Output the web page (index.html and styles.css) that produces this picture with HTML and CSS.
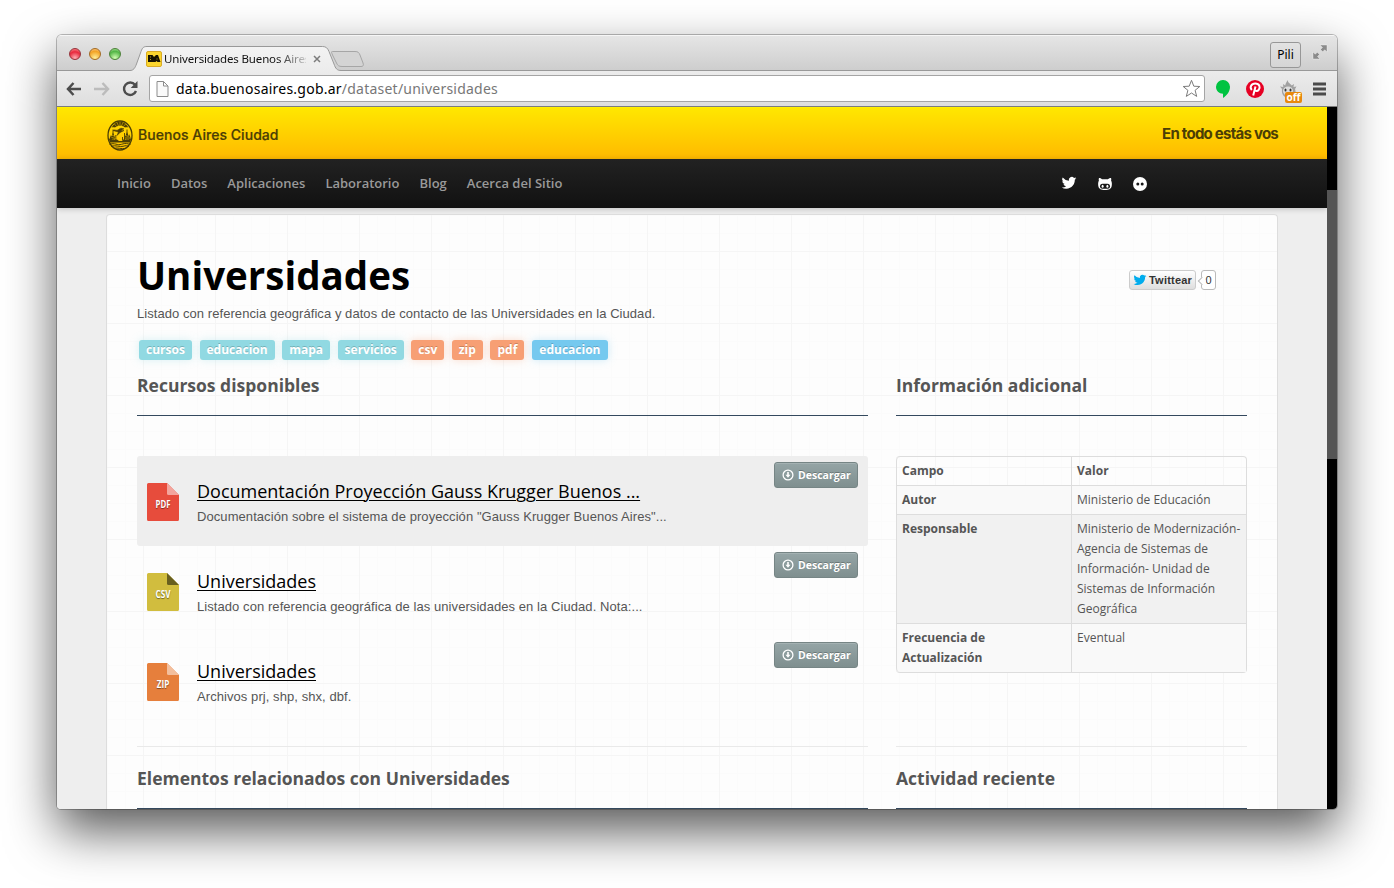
FILE: index.html
```
<!DOCTYPE html>
<html lang="es">
<head>
<meta charset="utf-8">
<title>Universidades Buenos Aires</title>
<link rel="stylesheet" href="styles.css">
</head>
<body>
<svg width="0" height="0" class="defs">
  <symbol id="bird" viewBox="0 0 24 24"><path d="M24 4.600a10 10 0 0 1-2.800.8 4.900 4.900 0 0 0 2.100-2.700 9.900 9.900 0 0 1-3.100 1.200 4.900 4.900 0 0 0-8.400 4.500A14 14 0 0 1 1.700 3.100a4.900 4.900 0 0 0 1.500 6.600 4.900 4.900 0 0 1-2.200-.6v.06a4.900 4.900 0 0 0 3.900 4.800 5 5 0 0 1-2.200.1 4.900 4.900 0 0 0 4.600 3.400A9.900 9.900 0 0 1 0 19.500 14 14 0 0 0 7.500 21.700c9.100 0 14.300-7.700 14-14.600A10 10 0 0 0 24 4.600z"/></symbol>
  <symbol id="down" viewBox="0 0 12 12"><circle cx="6" cy="6" r="4.900" fill="none" stroke="currentColor" stroke-width="1.300"/><path d="M5.200 3h1.600v2.800h1.700L6 8.700 3.500 5.800h1.700z" fill="currentColor"/></symbol>
</svg>
<div class="window">
  <div class="tabstrip">
    <div class="lights"><i class="light red"></i><i class="light amber"></i><i class="light green"></i></div>
    <div class="tab">
      <svg class="tab-shape" width="280" height="26" viewBox="0 0 280 26">
        <defs><linearGradient id="tg" x1="0" y1="0" x2="0" y2="1"><stop offset="0" stop-color="#f3f3f3"/><stop offset="1" stop-color="#ececec"/></linearGradient></defs>
        <path d="M0 25.500C3.500 25.500 5 23 6.500 19L11 6.500C12.500 2.500 13.500 1.500 17 1.500H192.500C196 1.500 197.500 3 199 6.500L204 19C205.500 23.500 207 25.500 211 25.500L211 26H0z" fill="url(#tg)"/>
        <path d="M0 25.500C3.500 25.500 5 23 6.500 19L11 6.500C12.500 2.500 13.500 1.500 17 1.500H192.500C196 1.500 197.500 3 199 6.500L204 19C205.500 23.500 207 25.500 211 25.500" fill="none" stroke="#999"/>
        <path d="M202.500 6.500H225C228 6.500 229 7.500 230 10L233 18C234 20.500 233 21.500 231 21.500H212C209 21.500 207.500 20.500 206.500 18L202.500 10C201.500 7.500 201 6.500 202.500 6.500z" fill="#d4d4d4" stroke="#a6a6a6"/>
      </svg>
      <div class="tab-content">
        <svg width="16" height="16" viewBox="0 0 16 16"><rect x=".5" y=".5" width="15" height="15" rx="1.500" fill="#fbd52e" stroke="#d9ab25"/><path d="M2 4h4.500l1.500 2 2-2h2l2.500 7h-3l-1-1-1 1H2z" fill="#161200"/><path d="M4 6h1M4 8.500h1M10.500 8h1" stroke="#fbd52e" stroke-width=".7"/></svg>
        <span class="tab-title">Universidades Buenos Aires</span>
        <svg class="close" width="8" height="8" viewBox="0 0 8 8"><path d="M1 1l6 6M7 1L1 7" stroke="#7c7c7c" stroke-width="1.500"/></svg>
      </div>
    </div>
    <div class="profile">Pili</div>
    <svg class="full" width="16" height="16" viewBox="0 0 16 16" fill="#8b8b8b"><path d="M8 1h7v7l-2.300-2.200-2 2L8.500 5.500l2-2zM8 15H1V8l2.300 2.200 2-2 2.200 2.300-2 2z" stroke="#f7f7f7" stroke-width=".4"/></svg>
  </div>
  <div class="toolbar">
    <svg class="arrow" width="16" height="14" viewBox="0 0 16 14"><path d="M7.500 1L2 7l5.500 6M2 7h13" fill="none" stroke="#4d4d4d" stroke-width="2.500"/></svg>
    <svg class="arrow next" width="16" height="14" viewBox="0 0 16 14"><path d="M8.500 1L14 7l-5.500 6M0 7h14" fill="none" stroke="#bcbcbc" stroke-width="2.500"/></svg>
    <svg class="reload" width="16" height="16" viewBox="0 0 16 16"><path d="M13 3.800A6.200 6.200 0 1 0 14 10" fill="none" stroke="#4d4d4d" stroke-width="2.400"/><path d="M15.500 0v7H8.700z" fill="#4d4d4d"/></svg>
    <div class="address">
      <svg width="13" height="16" viewBox="0 0 13 16"><path d="M1 .5h6.500l4.500 4.500v10.500H1zM7.500.5V5H12" fill="#fafafa" stroke="#8c8c8c"/></svg>
      <span class="url">data.buenosaires.gob.ar<span>/dataset/universidades</span></span>
      <svg class="star" width="19" height="19" viewBox="0 0 19 19"><path d="M9.500 1.300l2.300 5.900 6 .3-4.700 3.800 1.600 6.100-5.200-3.400-5.200 3.400 1.600-6.100L1.200 7.500l6-.3z" fill="#fff" stroke="#7b7b7b" stroke-linejoin="round"/></svg>
    </div>
    <svg class="hang" width="14" height="18" viewBox="0 0 14 18"><path d="M7 0a6.900 6.900 0 0 0-7 6.800c0 4 3 6.800 7 7V18c4-2.500 7-6.600 7-11.200A6.900 6.900 0 0 0 7 0z" fill="#00c341"/></svg>
    <svg class="pin" width="18" height="18" viewBox="0 0 18 18"><circle cx="9" cy="9" r="9" fill="#e60023"/><path d="M5.800 10C3.300 7.400 5.300 3.600 9.200 3.600c4.600 0 5.300 3.800 3.500 6.200-1.200 1.700-3.200 1.500-3.900.3M9.500 6.500L7.200 15.500" fill="none" stroke="#fff" stroke-width="2"/></svg>
    <div class="ghost">
      <svg width="17" height="18" viewBox="0 0 17 18"><path d="M7.500 0c-.8 2.500-2 3.200-2.300 5.500L3 4l.3 3L0 6.500 2 9c-.6 4.500 1 8 6 9h4c4-2 4-6 3-9l1.500-2.500-3 .5.500-3-2.300 1.500C11 4 8 3 7.500 0z" fill="#a1a1a1"/><ellipse cx="8" cy="11" rx="5" ry="4.500" fill="#ddd"/><ellipse cx="5.500" cy="10" rx="1" ry="1.500" fill="#333"/><ellipse cx="10.500" cy="10" rx="1" ry="1.500" fill="#333"/></svg>
      <span class="off">off</span>
    </div>
    <svg class="menu" width="13" height="14" viewBox="0 0 13 14"><path d="M0 2h13M0 7h13M0 12h13" stroke="#4b4b4b" stroke-width="2.800"/></svg>
  </div>
  <div class="page">
    <div class="site">
      <header class="brand">
        <svg class="seal" width="26" height="31" viewBox="0 0 26 31" fill="none" stroke="#4b3e05"><ellipse cx="13" cy="15.500" rx="12" ry="14.500" stroke-width="1.300"/><path d="M4.500 7.500C7 3.500 10 1.500 13 1.500s6 2 8.500 6c-1.500-.5-2.500-.5-3.500 0-2.500-2.500-7.500-2.500-10 0-1-.5-2-.5-3.500 0z" fill="#4b3e05" stroke="none"/><path d="M13 2v4M10 2.500l1.500 3.500M16 2.500L14.500 6M7.500 4l2 2.500M18.500 4l-2 2.500" stroke="#fc0" stroke-width=".5"/><path d="M6 10.500c2-1.500 3 .5 5-.5 2-1.500 3-2.500 6-1-1 0-2 .5-3 2l3-.5-4 2-3 3 1.500-3.500-2-.5z" fill="#4b3e05" stroke-width=".6"/><path d="M6 12.500L3.500 19h5zM4 15l-2 5h3zM20 12l-3 7h6zM22.500 14l-1 6H24z" fill="#4b3e05" stroke="none"/><path d="M6 9.500v11M20 9.500v11M17.500 13v7M8.800 15v5M15.500 17v3" stroke-width=".9"/><path d="M5 15l2 1M4.500 17.500l4 1M18.500 15.500l3 1M18 18h5" stroke="#fc0" stroke-width=".6"/><path d="M2 19.500h8l2 1.500h3l1-1.500h8l-1 3H3z" fill="#4b3e05" stroke="none"/><path d="M2.500 24.300c5-2 8 1.500 12 0s6-.5 9 0M4 26.300c5-1.500 9 1 12 0s4-.5 6 0M7 28.300c4-1 7 1 12 0" stroke-width="1"/></svg>
        <span class="city">Buenos Aires Ciudad</span>
        <span class="slogan">En todo estás vos</span>
      </header>
      <nav class="nav">
        <a>Inicio</a><a>Datos</a><a>Aplicaciones</a><a>Laboratorio</a><a>Blog</a><a>Acerca del Sitio</a>
        <div class="social">
          <svg width="16" height="15" viewBox="0 1 24 22" fill="#fff"><use href="#bird"/></svg>
          <svg width="14" height="14" viewBox="0 0 14 14"><path d="M1 1c1 0 2.300.5 3 1.200h6C10.700 1.500 12 1 13 1c.4 1 .3 2 .1 2.700C14 5 14 7 13.700 9c-.5 3-3 4-6.700 4S.8 12 .3 9C0 7 0 5 .9 3.700.7 3 .6 2 1 1z" fill="#fff"/><rect x="2" y="6.800" width="10" height="5" rx="2.500" fill="#181818"/><ellipse cx="4.600" cy="9.200" rx="1" ry="1.500" fill="#fff"/><ellipse cx="9.400" cy="9.200" rx="1" ry="1.500" fill="#fff"/></svg>
          <svg width="14" height="14" viewBox="0 0 14 14"><circle cx="7" cy="7" r="7" fill="#fff"/><circle cx="4.800" cy="7" r="1.500" fill="#181818"/><circle cx="9.200" cy="7" r="1.500" fill="#181818"/></svg>
        </div>
      </nav>
      <main class="card">
        <div class="heading">
          <h1>Universidades</h1>
          <div class="tweet"><span class="tweet-btn"><svg width="14" height="13" viewBox="0 1 24 22" fill="#00aced"><use href="#bird"/></svg>Twittear</span><span class="count">0</span></div>
        </div>
        <p class="lead">Listado con referencia geográfica y datos de contacto de las Universidades en la Ciudad.</p>
        <div class="tags">
          <span class="tag teal w53">cursos</span><span class="tag teal w75">educacion</span><span class="tag teal w48">mapa</span><span class="tag teal w66">servicios</span><span class="tag orange w33">csv</span><span class="tag orange w31">zip</span><span class="tag orange w34">pdf</span><span class="tag blue w76">educacion</span>
        </div>
        <div class="columns">
          <section>
            <h2>Recursos disponibles</h2>
            <div class="resources">
              <article class="resource shaded">
                <svg class="file" width="32" height="38" viewBox="0 0 32 38"><path d="M1.500 0H20l12 12v24.500a1.500 1.500 0 0 1-1.500 1.500h-29A1.500 1.500 0 0 1 0 36.500v-35A1.500 1.500 0 0 1 1.500 0z" fill="#e74c3c"/><path d="M20 0l12 12H21.500A1.500 1.500 0 0 1 20 10.500z" fill="#f3a59d"/><text x="16" y="25" textLength="15" lengthAdjust="spacingAndGlyphs">PDF</text></svg>
                <div class="info"><h3><a>Documentación Proyección Gauss Krugger Buenos ...</a></h3><p>Documentación sobre el sistema de proyección "Gauss Krugger Buenos Aires"...</p></div>
                <a class="download"><svg width="12" height="12"><use href="#down"/></svg>Descargar</a>
              </article>
              <article class="resource">
                <svg class="file" width="32" height="38" viewBox="0 0 32 38"><path d="M1.500 0H20l12 12v24.500a1.500 1.500 0 0 1-1.500 1.500h-29A1.500 1.500 0 0 1 0 36.500v-35A1.500 1.500 0 0 1 1.500 0z" fill="#d1bd3e"/><path d="M20 0l12 12H21.500A1.500 1.500 0 0 1 20 10.500z" fill="#685f1f"/><text x="16" y="25" textLength="15" lengthAdjust="spacingAndGlyphs">CSV</text></svg>
                <div class="info"><h3><a>Universidades</a></h3><p>Listado con referencia geográfica de las universidades en la Ciudad. Nota:...</p></div>
                <a class="download"><svg width="12" height="12"><use href="#down"/></svg>Descargar</a>
              </article>
              <article class="resource">
                <svg class="file" width="32" height="38" viewBox="0 0 32 38"><path d="M1.500 0H20l12 12v24.500a1.500 1.500 0 0 1-1.500 1.500h-29A1.500 1.500 0 0 1 0 36.500v-35A1.500 1.500 0 0 1 1.500 0z" fill="#e67f3c"/><path d="M20 0l12 12H21.500A1.500 1.500 0 0 1 20 10.500z" fill="#f3bf9d"/><text x="16" y="25" textLength="12.500" lengthAdjust="spacingAndGlyphs">ZIP</text></svg>
                <div class="info"><h3><a>Universidades</a></h3><p>Archivos prj, shp, shx, dbf.</p></div>
                <a class="download"><svg width="12" height="12"><use href="#down"/></svg>Descargar</a>
              </article>
            </div>
          </section>
          <section>
            <h2>Información adicional</h2>
            <table class="facts">
              <tr><th>Campo</th><th>Valor</th></tr>
              <tr class="odd"><th>Autor</th><td>Ministerio de Educación</td></tr>
              <tr class="even"><th>Responsable</th><td>Ministerio de Modernización- Agencia de Sistemas de Información- Unidad de Sistemas de Información Geográfica</td></tr>
              <tr class="odd"><th>Frecuencia de Actualización</th><td>Eventual</td></tr>
            </table>
          </section>
        </div>
        <div class="columns lower">
          <section><h2>Elementos relacionados con Universidades</h2></section>
          <section><h2>Actividad reciente</h2></section>
        </div>
      </main>
    </div>
    <div class="scrollbar"><div class="thumb"></div></div>
  </div>
</div>
</body>
</html>
```
FILE: styles.css
```
* { box-sizing: border-box; }
body { margin: 0; height: 888px; overflow: hidden; background: #fff; padding: 35px 57px; font-family: "Open Sans", sans-serif; color: #555; }
svg { display: block; flex: none; }
h1, h2, h3, p { margin: 0; }
.defs { position: absolute; }
.window { width: 1280px; height: 774px; border-radius: 5px 5px 4px 4px; overflow: hidden; box-shadow: 0 0 0 1px rgba(0,0,0,.25), 0 22px 50px rgba(0,0,0,.66); }

/* Browser frame */
.tabstrip { height: 36px; display: flex; align-items: center; padding: 0 9px 0 12px; background: linear-gradient(#e6e6e6, #cdcdcd); box-shadow: inset 0 1px #f6f6f6, inset 0 -1px #999; }
.lights { display: flex; gap: 8px; padding-top: 2px; width: 64px; flex: none; }
.light { width: 12px; height: 12px; border-radius: 50%; border: 1px solid; }
.red { background: radial-gradient(circle at 50% 90%, #ffb0b5, #e8283c 60%, #f99 100%); border-color: #96323a; }
.amber { background: radial-gradient(circle at 50% 90%, #fff09a, #f3a324 65%, #fc9 100%); border-color: #a36b23; }
.green { background: radial-gradient(circle at 50% 90%, #d5ffb5, #52b545 65%, #bea 100%); border-color: #4c8138; }
.tab { display: grid; align-self: flex-end; height: 26px; width: 280px; margin-left: -3px; }
.tab-shape, .tab-content { grid-area: 1 / 1; }
.tab-content { display: flex; align-items: center; padding: 2px 0 0 16px; height: 26px; }
.tab-title { margin-left: 2px; width: 142px; overflow: hidden; white-space: nowrap; color: #111; font: 11.500px/16px "Noto Sans", sans-serif; letter-spacing: -.15px; mask-image: linear-gradient(90deg, #000 112px, transparent 148px); }
.close { margin-left: 7px; }
.profile { margin-left: auto; width: 31px; height: 26px; margin-top: 3px; border: 1px solid #979797; border-radius: 3px; background: linear-gradient(#e2e2e2, #d5d5d5); color: #000; font: 12px/24px "Noto Sans", sans-serif; text-align: center; }
.full { margin-left: 11px; margin-bottom: 2px; }
.toolbar { height: 36px; display: flex; align-items: center; padding-left: 9px; background: linear-gradient(#ececec, #dedede); border-bottom: 1px solid #7c7c7c; }
.next { margin-left: 12px; }
.reload { margin-left: 12px; }
.address { margin-left: 11px; width: 1056px; height: 27px; border: 1px solid #a5a5a5; border-radius: 3px; background: #fff; display: flex; align-items: center; padding: 0 3px 0 6px; }
.url { margin-left: 7px; color: #000; font: 14px/20px "Noto Sans", sans-serif; letter-spacing: .23px; white-space: nowrap; }
.url span { color: #777; }
.star { margin-left: auto; }
.hang { margin-left: 11px; }
.pin { margin-left: 16px; }
.ghost { margin-left: 16px; width: 22px; position: relative; }
.off { position: absolute; left: 5px; top: 12px; width: 17px; height: 11px; border-radius: 2px; background: #e8890c; color: #fff; font: bold 10px/10px "Noto Sans", sans-serif; text-align: center; }
.menu { margin-left: 11px; }

/* Site */
.page { display: flex; height: 702px; }
.site { width: 1270px; background: #eee; }
.scrollbar { width: 10px; background: #000; padding-top: 83px; }
.thumb { height: 269px; background: #555; }
.brand { height: 52px; display: flex; align-items: center; padding: 4px 49px 0 50px; background: linear-gradient(#ffe800, #ffb900); box-shadow: inset 0 1px #fff000; color: #4b3e05; }
.city { margin-left: 5px; font: 500 14px/20px Inter, sans-serif; letter-spacing: .05px; -webkit-text-stroke: .2px; }
.slogan { margin-left: auto; margin-bottom: 2px; font: 700 15px/20px Inter, sans-serif; letter-spacing: -.75px; }
.nav { height: 49px; display: flex; align-items: center; gap: 20px; padding: 0 180px 0 60px; background: linear-gradient(#222, #111); box-shadow: 0 1px 6px rgba(0,0,0,.2); color: #999; font-size: 13px; font-weight: 600; }
.nav a { padding-bottom: 2px; }
.social { margin-left: auto; display: flex; align-items: center; gap: 21px; }
.card { margin: 6px 49px 0; height: 596px; padding: 30px; border: 1px solid #ddd; border-bottom: 0; border-radius: 4px 4px 0 0; overflow: hidden; background:
    repeating-linear-gradient(90deg, transparent 0 36px, #f5f5f5 36px 37px, transparent 37px 72px),
    repeating-linear-gradient(transparent 0 36px, #f5f5f5 36px 37px, transparent 37px 72px),
    repeating-linear-gradient(90deg, #fbfbfb 0 1px, transparent 1px 18px),
    repeating-linear-gradient(#fbfbfb 0 1px, transparent 1px 18px), #fdfdfd; }
.heading { display: flex; justify-content: space-between; height: 60px; }
h1 { font-size: 38.500px; line-height: 60px; color: #000; font-weight: 700; }
.tweet { display: flex; gap: 5px; align-items: flex-start; padding: 25px 31px 0 0; }
.tweet-btn { display: flex; align-items: center; gap: 2px; height: 20px; width: 67px; padding-left: 3px; border: 1px solid #ccc; border-radius: 3px; background: linear-gradient(#fff, #dedede); color: #333; font: bold 11px/18px "Liberation Sans", sans-serif; letter-spacing: .22px; }
.count { position: relative; height: 20px; width: 15px; border: 1px solid #bbb; border-radius: 3px; background: #fff; color: #333; font: 11px/18px "Liberation Sans", sans-serif; text-align: center; }
.count::before { content: ""; position: absolute; left: -3.500px; top: 6.500px; width: 5px; height: 5px; border-left: 1px solid #bbb; border-bottom: 1px solid #bbb; background: #fff; transform: rotate(45deg); }
.lead { font: 13px/20px "Liberation Sans", sans-serif; letter-spacing: .06px; margin-top: -1px; }
.tags { display: flex; gap: 7.570px; margin: 16px 0 0 2px; }
.tag { height: 20px; border-radius: 3px; color: #fff; font-size: 12px; font-weight: 700; line-height: 19px; text-align: center; text-shadow: 0 -1px rgba(0,0,0,.2); }
.teal { background: #91d9e2; box-shadow: 0 0 8px rgba(145,217,226,.35); }
.orange { background: #f79f74; box-shadow: 0 0 8px rgba(247,159,116,.35); }
.blue { background: #75c9ef; box-shadow: 0 0 8px rgba(117,201,239,.35); }
.w53 { width: 53px; } .w75 { width: 75px; } .w48 { width: 48px; } .w66 { width: 66px; } .w33 { width: 33px; } .w31 { width: 31px; } .w34 { width: 34px; } .w76 { width: 76px; }
.columns { display: grid; grid-template-columns: 731px 351px; column-gap: 28px; height: 387px; }
.columns section { border-bottom: 1px solid #e9e9e9; }
h2 { font-size: 17.500px; line-height: 40px; height: 56px; padding-top: 5px; border-bottom: 1px solid #34495e; font-weight: 700; }
.lower { height: 80px; }
.lower section { border: 0; }
.lower h2 { height: 62px; padding-top: 11px; }
.resources { margin-top: 40px; }
.resource { height: 90px; display: flex; padding: 0 10px; border-radius: 3px; }
.shaded { background: #eee; }
.file { margin-top: 27px; }
.file text { font: bold 10.500px "Open Sans", sans-serif; fill: #fff; text-anchor: middle; text-shadow: 0 1px 1px rgba(0,0,0,.45); }
.info { margin-left: 18px; padding-top: 20px; }
h3 { font-size: 18px; line-height: 30px; height: 31px; font-weight: 400; color: #000; }
h3 a { text-decoration: underline; text-decoration-thickness: 1px; text-underline-offset: 2px; }
.info p { font: 13px/20px "Liberation Sans", sans-serif; letter-spacing: .07px; }
.download { margin: 6px 0 0 auto; width: 84px; height: 26px; display: flex; align-items: center; gap: 4px; padding-left: 7px; border: 1px solid #768585; border-radius: 3px; background: linear-gradient(#95a5a6, #7f8f8f); box-shadow: inset 0 1px rgba(255,255,255,.15); color: #fff; font-size: 10.500px; font-weight: 700; text-shadow: 0 -1px rgba(0,0,0,.25); }
.facts { margin-top: 40px; width: 351px; table-layout: fixed; border-collapse: separate; border-spacing: 0; border: 1px solid #ddd; border-left: 0; border-radius: 4px; font-size: 12px; line-height: 20px; }
.facts th, .facts td { padding: 4px 5px; border-left: 1px solid #ddd; text-align: left; vertical-align: top; }
.facts tr + tr > * { border-top: 1px solid #ddd; }
.facts tr:first-child th:first-child { border-top-left-radius: 4px; }
.facts tr:last-child th:first-child { border-bottom-left-radius: 4px; }
.odd { background: #f9f9f9; }
.even { background: #f1f1f1; }
```
